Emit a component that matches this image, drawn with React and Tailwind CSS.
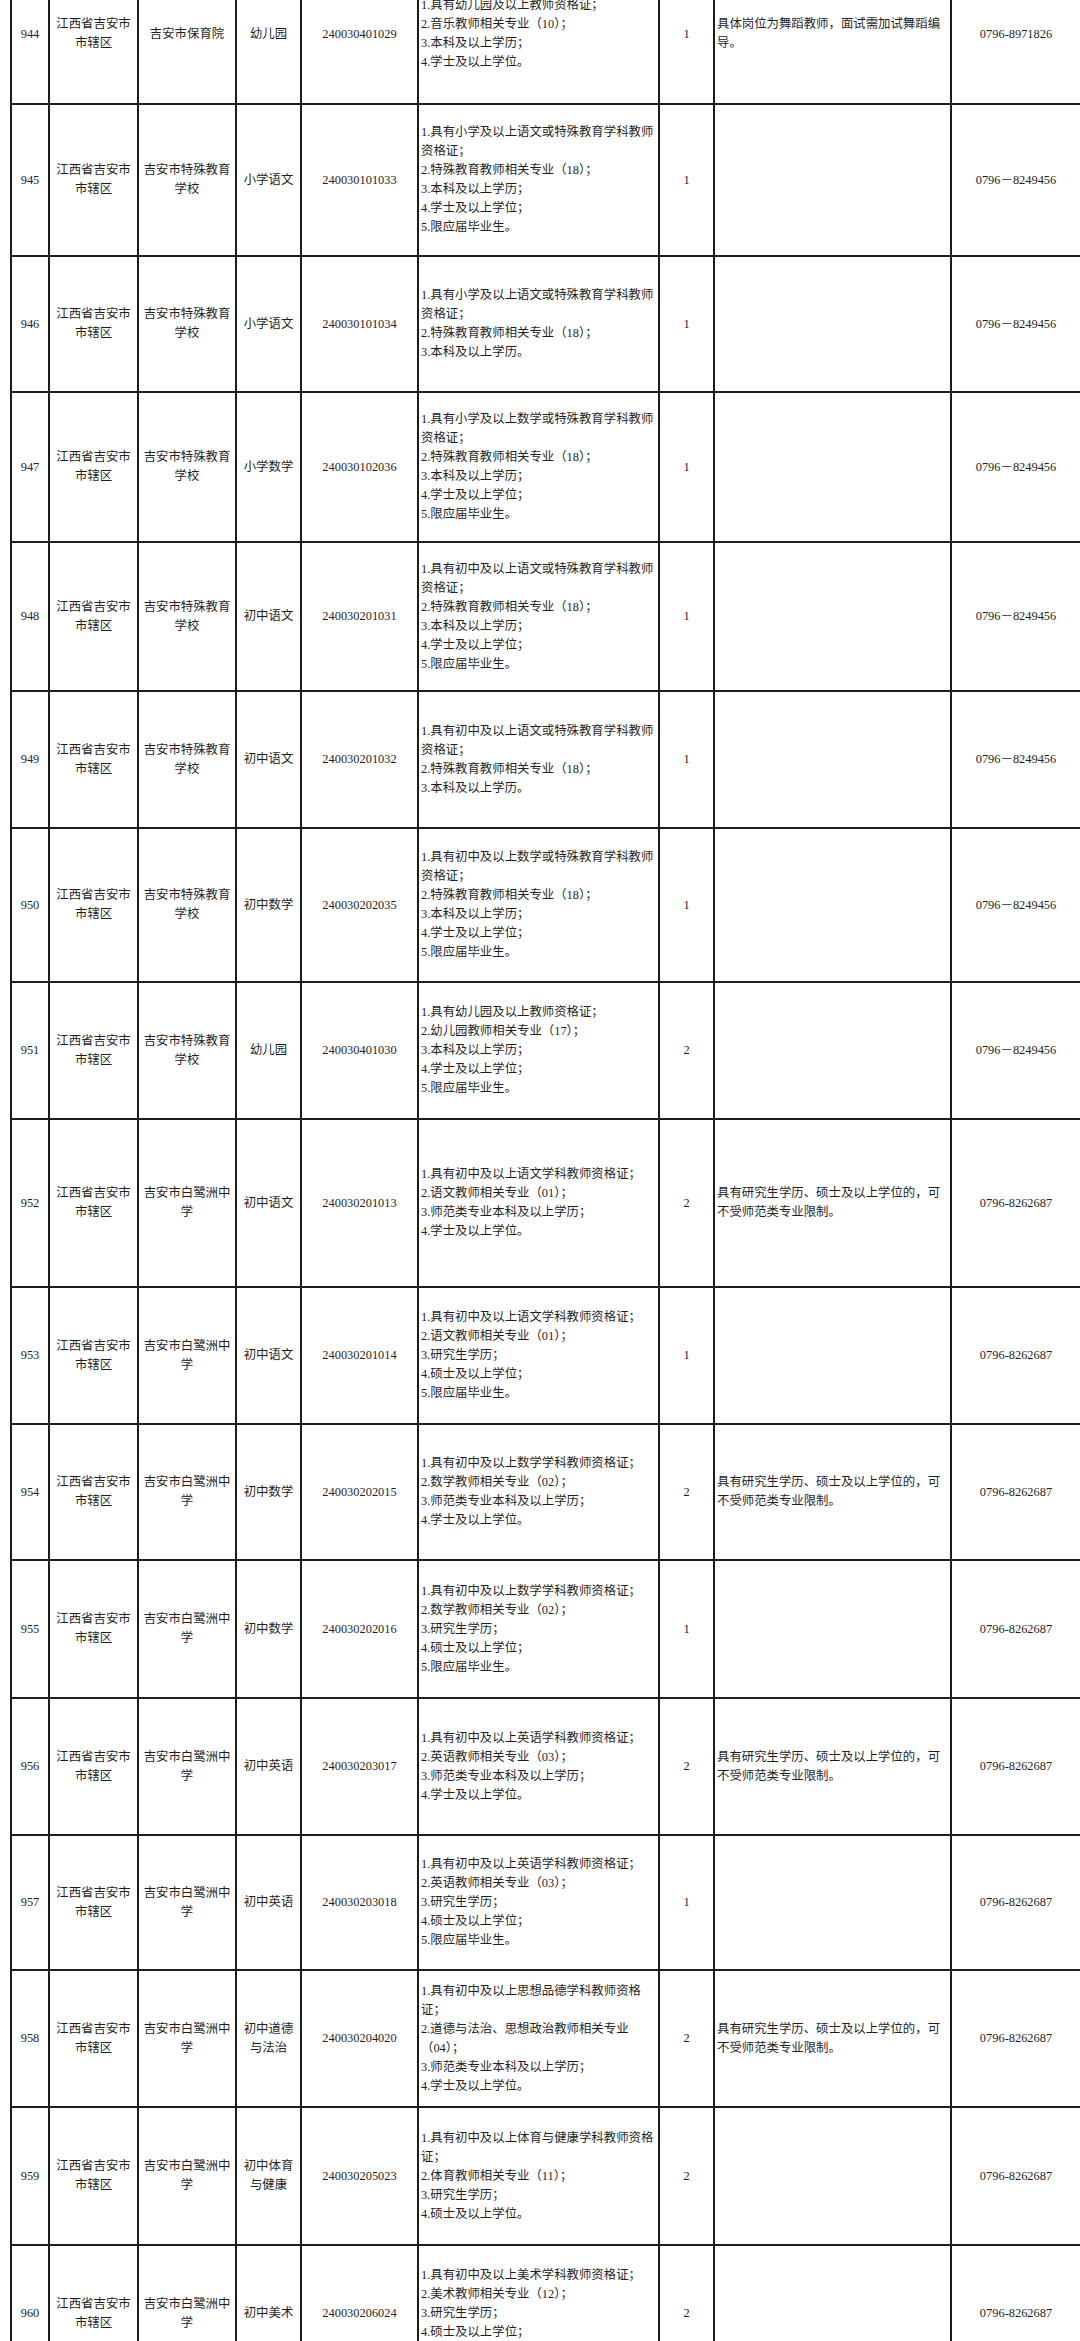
const region = ["江西省吉安市", "市辖区"]
const special = ["吉安市特殊教育", "学校"]
const bailuzhou = ["吉安市白鹭洲中", "学"]
const masterNote = ["具有研究生学历、硕士及以上学位的，可", "不受师范类专业限制。"]

const rows = [
    {
        no: "944", unit: ["吉安市保育院"], post: ["幼儿园"], code: "240030401029",
        req: ["1.具有幼儿园及以上教师资格证；", "2.音乐教师相关专业（10）；", "3.本科及以上学历；", "4.学士及以上学位。"],
        count: "1", note: ["具体岗位为舞蹈教师，面试需加试舞蹈编", "导。"], tel: "0796-8971826", h: "h-[140px]",
    },
    {
        no: "945", unit: special, post: ["小学语文"], code: "240030101033",
        req: ["1.具有小学及以上语文或特殊教育学科教师", "资格证；", "2.特殊教育教师相关专业（18）；", "3.本科及以上学历；", "4.学士及以上学位；", "5.限应届毕业生。"],
        count: "1", note: [], tel: "0796－8249456", h: "h-[152px]",
    },
    {
        no: "946", unit: special, post: ["小学语文"], code: "240030101034",
        req: ["1.具有小学及以上语文或特殊教育学科教师", "资格证；", "2.特殊教育教师相关专业（18）；", "3.本科及以上学历。"],
        count: "1", note: [], tel: "0796－8249456", h: "h-[136px]",
    },
    {
        no: "947", unit: special, post: ["小学数学"], code: "240030102036",
        req: ["1.具有小学及以上数学或特殊教育学科教师", "资格证；", "2.特殊教育教师相关专业（18）；", "3.本科及以上学历；", "4.学士及以上学位；", "5.限应届毕业生。"],
        count: "1", note: [], tel: "0796－8249456", h: "h-[150px]",
    },
    {
        no: "948", unit: special, post: ["初中语文"], code: "240030201031",
        req: ["1.具有初中及以上语文或特殊教育学科教师", "资格证；", "2.特殊教育教师相关专业（18）；", "3.本科及以上学历；", "4.学士及以上学位；", "5.限应届毕业生。"],
        count: "1", note: [], tel: "0796－8249456", h: "h-[149px]",
    },
    {
        no: "949", unit: special, post: ["初中语文"], code: "240030201032",
        req: ["1.具有初中及以上语文或特殊教育学科教师", "资格证；", "2.特殊教育教师相关专业（18）；", "3.本科及以上学历。"],
        count: "1", note: [], tel: "0796－8249456", h: "h-[137px]",
    },
    {
        no: "950", unit: special, post: ["初中数学"], code: "240030202035",
        req: ["1.具有初中及以上数学或特殊教育学科教师", "资格证；", "2.特殊教育教师相关专业（18）；", "3.本科及以上学历；", "4.学士及以上学位；", "5.限应届毕业生。"],
        count: "1", note: [], tel: "0796－8249456", h: "h-[154px]",
    },
    {
        no: "951", unit: special, post: ["幼儿园"], code: "240030401030",
        req: ["1.具有幼儿园及以上教师资格证；", "2.幼儿园教师相关专业（17）；", "3.本科及以上学历；", "4.学士及以上学位；", "5.限应届毕业生。"],
        count: "2", note: [], tel: "0796－8249456", h: "h-[137px]",
    },
    {
        no: "952", unit: bailuzhou, post: ["初中语文"], code: "240030201013",
        req: ["1.具有初中及以上语文学科教师资格证；", "2.语文教师相关专业（01）；", "3.师范类专业本科及以上学历；", "4.学士及以上学位。"],
        count: "2", note: masterNote, tel: "0796-8262687", h: "h-[168px]",
    },
    {
        no: "953", unit: bailuzhou, post: ["初中语文"], code: "240030201014",
        req: ["1.具有初中及以上语文学科教师资格证；", "2.语文教师相关专业（01）；", "3.研究生学历；", "4.硕士及以上学位；", "5.限应届毕业生。"],
        count: "1", note: [], tel: "0796-8262687", h: "h-[137px]",
    },
    {
        no: "954", unit: bailuzhou, post: ["初中数学"], code: "240030202015",
        req: ["1.具有初中及以上数学学科教师资格证；", "2.数学教师相关专业（02）；", "3.师范类专业本科及以上学历；", "4.学士及以上学位。"],
        count: "2", note: masterNote, tel: "0796-8262687", h: "h-[136px]",
    },
    {
        no: "955", unit: bailuzhou, post: ["初中数学"], code: "240030202016",
        req: ["1.具有初中及以上数学学科教师资格证；", "2.数学教师相关专业（02）；", "3.研究生学历；", "4.硕士及以上学位；", "5.限应届毕业生。"],
        count: "1", note: [], tel: "0796-8262687", h: "h-[138px]",
    },
    {
        no: "956", unit: bailuzhou, post: ["初中英语"], code: "240030203017",
        req: ["1.具有初中及以上英语学科教师资格证；", "2.英语教师相关专业（03）；", "3.师范类专业本科及以上学历；", "4.学士及以上学位。"],
        count: "2", note: masterNote, tel: "0796-8262687", h: "h-[137px]",
    },
    {
        no: "957", unit: bailuzhou, post: ["初中英语"], code: "240030203018",
        req: ["1.具有初中及以上英语学科教师资格证；", "2.英语教师相关专业（03）；", "3.研究生学历；", "4.硕士及以上学位；", "5.限应届毕业生。"],
        count: "1", note: [], tel: "0796-8262687", h: "h-[135px]",
    },
    {
        no: "958", unit: bailuzhou, post: ["初中道德", "与法治"], code: "240030204020",
        req: ["1.具有初中及以上思想品德学科教师资格", "证；", "2.道德与法治、思想政治教师相关专业", "（04）；", "3.师范类专业本科及以上学历；", "4.学士及以上学位。"],
        count: "2", note: masterNote, tel: "0796-8262687", h: "h-[137px]",
    },
    {
        no: "959", unit: bailuzhou, post: ["初中体育", "与健康"], code: "240030205023",
        req: ["1.具有初中及以上体育与健康学科教师资格", "证；", "2.体育教师相关专业（11）；", "3.研究生学历；", "4.硕士及以上学位。"],
        count: "2", note: [], tel: "0796-8262687", h: "h-[138px]",
    },
    {
        no: "960", unit: bailuzhou, post: ["初中美术"], code: "240030206024",
        req: ["1.具有初中及以上美术学科教师资格证；", "2.美术教师相关专业（12）；", "3.研究生学历；", "4.硕士及以上学位；", "5.限应届毕业生。"],
        count: "2", note: [], tel: "0796-8262687", h: "h-[137px]",
    },
]

function Lines({ items }) {
    return items.map((line, i) => (
        <div key={i} className="whitespace-nowrap">{line}</div>
    ))
}

function App() {
    const cell = "border-2 border-[#1d1d1d] p-0 align-middle"

    return (
        <div className="w-[1080px] h-[2341px] overflow-hidden bg-white">
            <table className="mt-[-37px] ml-[10px] w-[1070px] table-fixed border-collapse text-[12.4px] leading-[19px] text-[#1f1f1f] font-['Liberation_Serif','Noto_Sans_CJK_SC',serif]">
                <colgroup>
                    <col className="w-[38px]" />
                    <col className="w-[89px]" />
                    <col className="w-[98px]" />
                    <col className="w-[65px]" />
                    <col className="w-[117px]" />
                    <col className="w-[241px]" />
                    <col className="w-[55px]" />
                    <col className="w-[237px]" />
                    <col className="w-[130px]" />
                </colgroup>
                <tbody>
                    {rows.map((r) => (
                        <tr key={r.no} className={r.h}>
                            <td className={`${cell} text-center`}>{r.no}</td>
                            <td className={`${cell} text-center`}><Lines items={region} /></td>
                            <td className={`${cell} text-center`}><Lines items={r.unit} /></td>
                            <td className={`${cell} text-center`}><Lines items={r.post} /></td>
                            <td className={`${cell} text-center`}>{r.code}</td>
                            <td className={`${cell} pl-[2px] text-left`}><Lines items={r.req} /></td>
                            <td className={`${cell} text-center`}>{r.count}</td>
                            <td className={`${cell} pl-[2px] text-left`}><Lines items={r.note} /></td>
                            <td className={`${cell} text-center`}>{r.tel}</td>
                        </tr>
                    ))}
                </tbody>
            </table>
        </div>
    )
}

export default App
